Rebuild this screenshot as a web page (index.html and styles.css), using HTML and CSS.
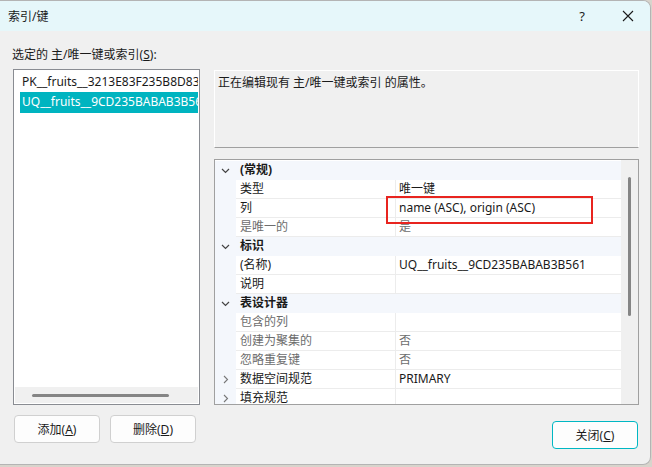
FILE: index.html
```html
<!DOCTYPE html>
<html lang="zh-CN">
<head>
    <meta charset="UTF-8">
    <title>索引/键</title>
    <link rel="stylesheet" href="styles.css">
</head>
<body>
    <div class="window">
        <div class="titlebar">
            <div class="title">索引/键</div>
            <div class="help">?</div>
            <div class="close">
                <svg width="12" height="12" viewBox="0 0 12 12"><path d="M1 1 L11 11 M11 1 L1 11" stroke="#1a1a1a" stroke-width="1.1" fill="none"/></svg>
            </div>
        </div>

        <div class="content">
            <div class="caption">选定的 主/唯一键或索引(<u>S</u>):</div>
            <div class="main">
                <div class="list">
                    <div class="items">
                        <div class="item">PK__fruits__3213E83F235B8D83</div>
                        <div class="item selected">UQ__fruits__9CD235BABAB3B561</div>
                    </div>
                    <div class="hscroll"><div class="hthumb"></div></div>
                </div>

                <div class="right">
                    <div class="desc">正在编辑现有 主/唯一键或索引 的属性。</div>
                    <div class="grid">
                        <div class="rows">
                            <div class="row cat"><div class="gut"><svg class="chev" width="9" height="6" viewBox="0 0 9 6"><path d="M1 1 L4.5 4.5 L8 1" stroke="#444" stroke-width="1.2" fill="none"/></svg></div><div class="name">(常规)</div></div>
                            <div class="row"><div class="gut"></div><div class="name">类型</div><div class="val">唯一键</div></div>
                            <div class="row"><div class="gut"></div><div class="name">列</div><div class="val">name (ASC), origin (ASC)</div></div>
                            <div class="row ro"><div class="gut"></div><div class="name">是唯一的</div><div class="val">是</div></div>
                            <div class="row cat"><div class="gut"><svg class="chev" width="9" height="6" viewBox="0 0 9 6"><path d="M1 1 L4.5 4.5 L8 1" stroke="#444" stroke-width="1.2" fill="none"/></svg></div><div class="name">标识</div></div>
                            <div class="row"><div class="gut"></div><div class="name">(名称)</div><div class="val">UQ__fruits__9CD235BABAB3B561</div></div>
                            <div class="row"><div class="gut"></div><div class="name">说明</div><div class="val"></div></div>
                            <div class="row cat"><div class="gut"><svg class="chev" width="9" height="6" viewBox="0 0 9 6"><path d="M1 1 L4.5 4.5 L8 1" stroke="#444" stroke-width="1.2" fill="none"/></svg></div><div class="name">表设计器</div></div>
                            <div class="row ro"><div class="gut"></div><div class="name">包含的列</div><div class="val"></div></div>
                            <div class="row ro"><div class="gut"></div><div class="name">创建为聚集的</div><div class="val">否</div></div>
                            <div class="row ro"><div class="gut"></div><div class="name">忽略重复键</div><div class="val">否</div></div>
                            <div class="row"><div class="gut"><svg class="chev" width="6" height="9" viewBox="0 0 6 9"><path d="M1 1 L4.5 4.5 L1 8" stroke="#777" stroke-width="1.1" fill="none"/></svg></div><div class="name">数据空间规范</div><div class="val">PRIMARY</div></div>
                            <div class="row"><div class="gut"><svg class="chev" width="6" height="9" viewBox="0 0 6 9"><path d="M1 1 L4.5 4.5 L1 8" stroke="#777" stroke-width="1.1" fill="none"/></svg></div><div class="name">填充规范</div><div class="val"></div></div>
                        </div>
                        <div class="vscroll"><div class="vthumb"></div></div>
                        <div class="mark"></div>
                    </div>
                </div>
            </div>

            <div class="footer">
                <div class="btn">添加(<u>A</u>)</div>
                <div class="btn">删除(<u>D</u>)</div>
                <div class="spacer"></div>
                <div class="btn default">关闭(<u>C</u>)</div>
            </div>
        </div>
    </div>
</body>
</html>
```

FILE: styles.css
```css
* {
    box-sizing: border-box;
}
body {
    margin: 0;
    background: #d8d4cc;
    font-family: "Noto Sans", "Noto Sans CJK SC", sans-serif;
    font-size: 12px;
    color: #1a1a1a;
}

.window {
    width: 651px;
    height: 465px;
    background: #f0f0f0;
    border: 1px solid #b4b4b4;
    border-left: none;
    border-radius: 0 8px 8px 0;
    overflow: hidden;
    display: flex;
    flex-direction: column;
}

.titlebar {
    height: 30px;
    background: #e6f7fa;
    display: flex;
    align-items: center;
    padding-left: 8px;
    flex-shrink: 0;
}
.title {
    flex: 1;
    font-size: 12px;
}
.help {
    width: 44px;
    font-size: 13px;
    text-align: center;
    margin-right: 2px;
}
.close {
    width: 44px;
    height: 30px;
    display: flex;
    align-items: center;
    justify-content: center;
}

.content {
    flex: 1;
    display: flex;
    flex-direction: column;
}
.caption {
    padding: 16px 0 0 12px;
    height: 38px;
    line-height: 16px;
}

.main {
    display: flex;
    gap: 14px;
    padding-left: 13px;
}

.list {
    width: 187px;
    height: 336px;
    background: #fff;
    border: 1px solid #898c92;
    display: flex;
    flex-direction: column;
    padding: 2px 1px 1px 1px;
}
.items {
    flex: 1;
    overflow: hidden;
    padding-left: 5px;
}
.item {
    height: 20px;
    line-height: 20px;
    padding-left: 2px;
    white-space: nowrap;
    overflow: hidden;
}
.item.selected {
    background: #00b4c0;
    color: #fff;
    height: 21px;
}
.hscroll {
    height: 16px;
    background: #f0f0f0;
    display: flex;
    align-items: center;
    padding-left: 17px;
}
.hthumb {
    width: 137px;
    height: 3px;
    background: #858585;
    border-radius: 2px;
}

.right {
    width: 425px;
    display: flex;
    flex-direction: column;
    gap: 11px;
    padding-top: 1px;
}
.desc {
    height: 78px;
    border: 1px solid #fff;
    border-bottom-color: #a0a0a0;
    padding: 4px 3px;
    line-height: 16px;
}

.grid {
    height: 246px;
    border: 1px solid #a0a0a0;
    display: flex;
    position: relative;
    background: #fff;
}
.rows {
    flex: 1;
    overflow: hidden;
    padding-top: 1px;
}
.row {
    display: flex;
    height: 19px;
    line-height: 18px;
}
.gut {
    width: 21px;
    background: #f4f7fc;
    display: flex;
    align-items: center;
    justify-content: center;
    flex-shrink: 0;
}
.name {
    width: 160px;
    padding-left: 4px;
    border-bottom: 1px solid #ececec;
    border-right: 1px solid #ececec;
    white-space: nowrap;
}
.val {
    flex: 1;
    padding-left: 3px;
    border-bottom: 1px solid #ececec;
    white-space: nowrap;
}
.cat .name {
    flex: 1;
    background: #f4f7fc;
    font-weight: bold;
    border: none;
}
.ro .name,
.ro .val {
    color: #6d6d6d;
}
.chev {
    display: block;
}

.vscroll {
    width: 17px;
    background: #f0f0f0;
    padding-top: 17px;
    display: flex;
    justify-content: center;
}
.vthumb {
    width: 3px;
    height: 139px;
    background: #858585;
    border-radius: 2px;
}

.mark {
    position: absolute;
    left: 171px;
    top: 36px;
    width: 207px;
    height: 28px;
    border: 2px solid #e8241f;
}

.footer {
    display: flex;
    padding: 10px 12px 0 14px;
    gap: 10px;
    align-items: flex-start;
}
.spacer {
    flex: 1;
}
.btn {
    width: 86px;
    height: 28px;
    background: #fdfdfd;
    border: 1px solid #d0d0d0;
    border-radius: 4px;
    display: flex;
    align-items: center;
    justify-content: center;
}
.btn.default {
    margin-top: 6px;
    border-color: #00b7c3;
}
```
